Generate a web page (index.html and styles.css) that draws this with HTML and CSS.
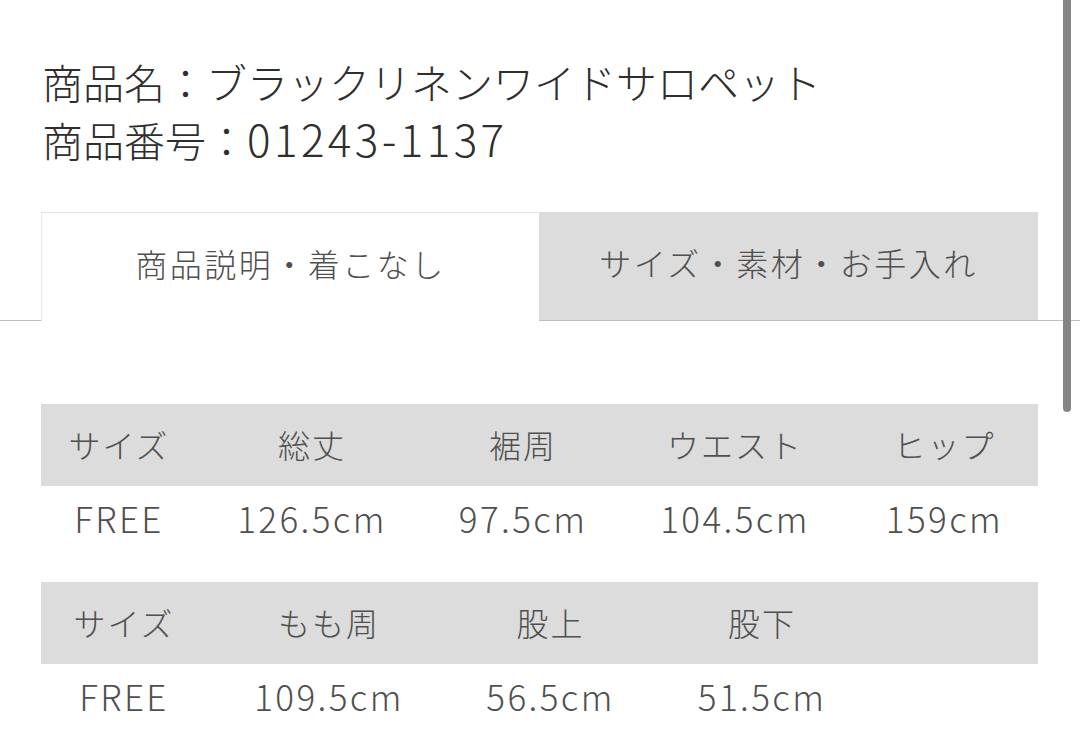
FILE: index.html
```html
<!DOCTYPE html>
<html lang="ja">
<head>
<meta charset="utf-8">
<link rel="stylesheet" href="styles.css">
</head>
<body>
<div class="page">
  <div class="title">
    <div class="title-line">商品名：ブラックリネンワイドサロペット</div>
    <div class="title-line">商品番号：<span class="code">01243-1137</span></div>
  </div>
  <div class="tabs">
    <div class="tab tab-active">商品説明・着こなし</div>
    <div class="tab tab-inactive">サイズ・素材・お手入れ</div>
  </div>
  <div class="tables">
    <div class="size-table t1">
      <div class="cell head">サイズ</div>
      <div class="cell head">総丈</div>
      <div class="cell head">裾周</div>
      <div class="cell head">ウエスト</div>
      <div class="cell head">ヒップ</div>
      <div class="cell data">FREE</div>
      <div class="cell data">126.5cm</div>
      <div class="cell data">97.5cm</div>
      <div class="cell data">104.5cm</div>
      <div class="cell data">159cm</div>
    </div>
    <div class="size-table t2">
      <div class="cell head">サイズ</div>
      <div class="cell head">もも周</div>
      <div class="cell head">股上</div>
      <div class="cell head">股下</div>
      <div class="cell head"></div>
      <div class="cell data">FREE</div>
      <div class="cell data">109.5cm</div>
      <div class="cell data">56.5cm</div>
      <div class="cell data">51.5cm</div>
      <div class="cell data"></div>
    </div>
  </div>
  <div class="scroll-indicator"></div>
</div>
</body>
</html>
```

FILE: styles.css
```css
* { box-sizing: border-box; }
html, body {
  margin: 0;
  padding: 0;
  background: #ffffff;
}
body {
  font-family: "Noto Sans CJK JP", "Noto Sans", sans-serif;
  font-weight: 300;
  color: #4d4d4d;
}
.page {
  position: relative;
  width: 1080px;
  height: 756px;
  overflow: hidden;
}
.title {
  padding: 52px 0 0 42px;
}
.title-line {
  font-size: 41px;
  line-height: 58px;
  height: 58px;
  color: #2e2e2e;
  letter-spacing: 0;
  white-space: nowrap;
}
.code {
  font-size: 44px;
  line-height: 1;
  letter-spacing: 3.4px;
}
.tabs {
  margin-top: 44px;
  display: flex;
  padding-left: 41px;
  border-bottom: 1px solid #bdbdbd;
  height: 109px;
}
.tab {
  width: 498px;
  display: flex;
  align-items: center;
  justify-content: center;
  padding-bottom: 8px;
  font-size: 32px;
  letter-spacing: 2.5px;
  color: #4f4f4f;
}
.tab-active {
  background: #ffffff;
  border-top: 1px solid #e2e2e2;
  border-left: 1px solid #e8e8e8;
  height: 109px;
  position: relative;
  z-index: 1;
}
.tab-inactive {
  width: 499px;
  background: #dcdcdc;
  height: 108px;
}
.tables {
  padding: 83px 0 0 41px;
}
.size-table {
  display: grid;
  width: 997px;
}
.t1 {
  grid-template-columns: 156px 230px 192px 232px 187px;
}
.t2 {
  margin-top: 28px;
  grid-template-columns: 166px 244px 199px 224px 164px;
}
.cell {
  display: flex;
  align-items: center;
  justify-content: center;
  font-size: 32px;
  color: #4f4f4f;
  white-space: nowrap;
}
.head {
  background: #dcdcdc;
  height: 82px;
  letter-spacing: 2px;
  padding-bottom: 2px;
}
.data {
  height: 68px;
  font-size: 35px;
  letter-spacing: 2.4px;
  padding-bottom: 6px;
}
.scroll-indicator {
  position: absolute;
  left: 1063px;
  top: -6px;
  width: 8px;
  height: 418px;
  border-radius: 4px;
  background: #858585;
}
```
